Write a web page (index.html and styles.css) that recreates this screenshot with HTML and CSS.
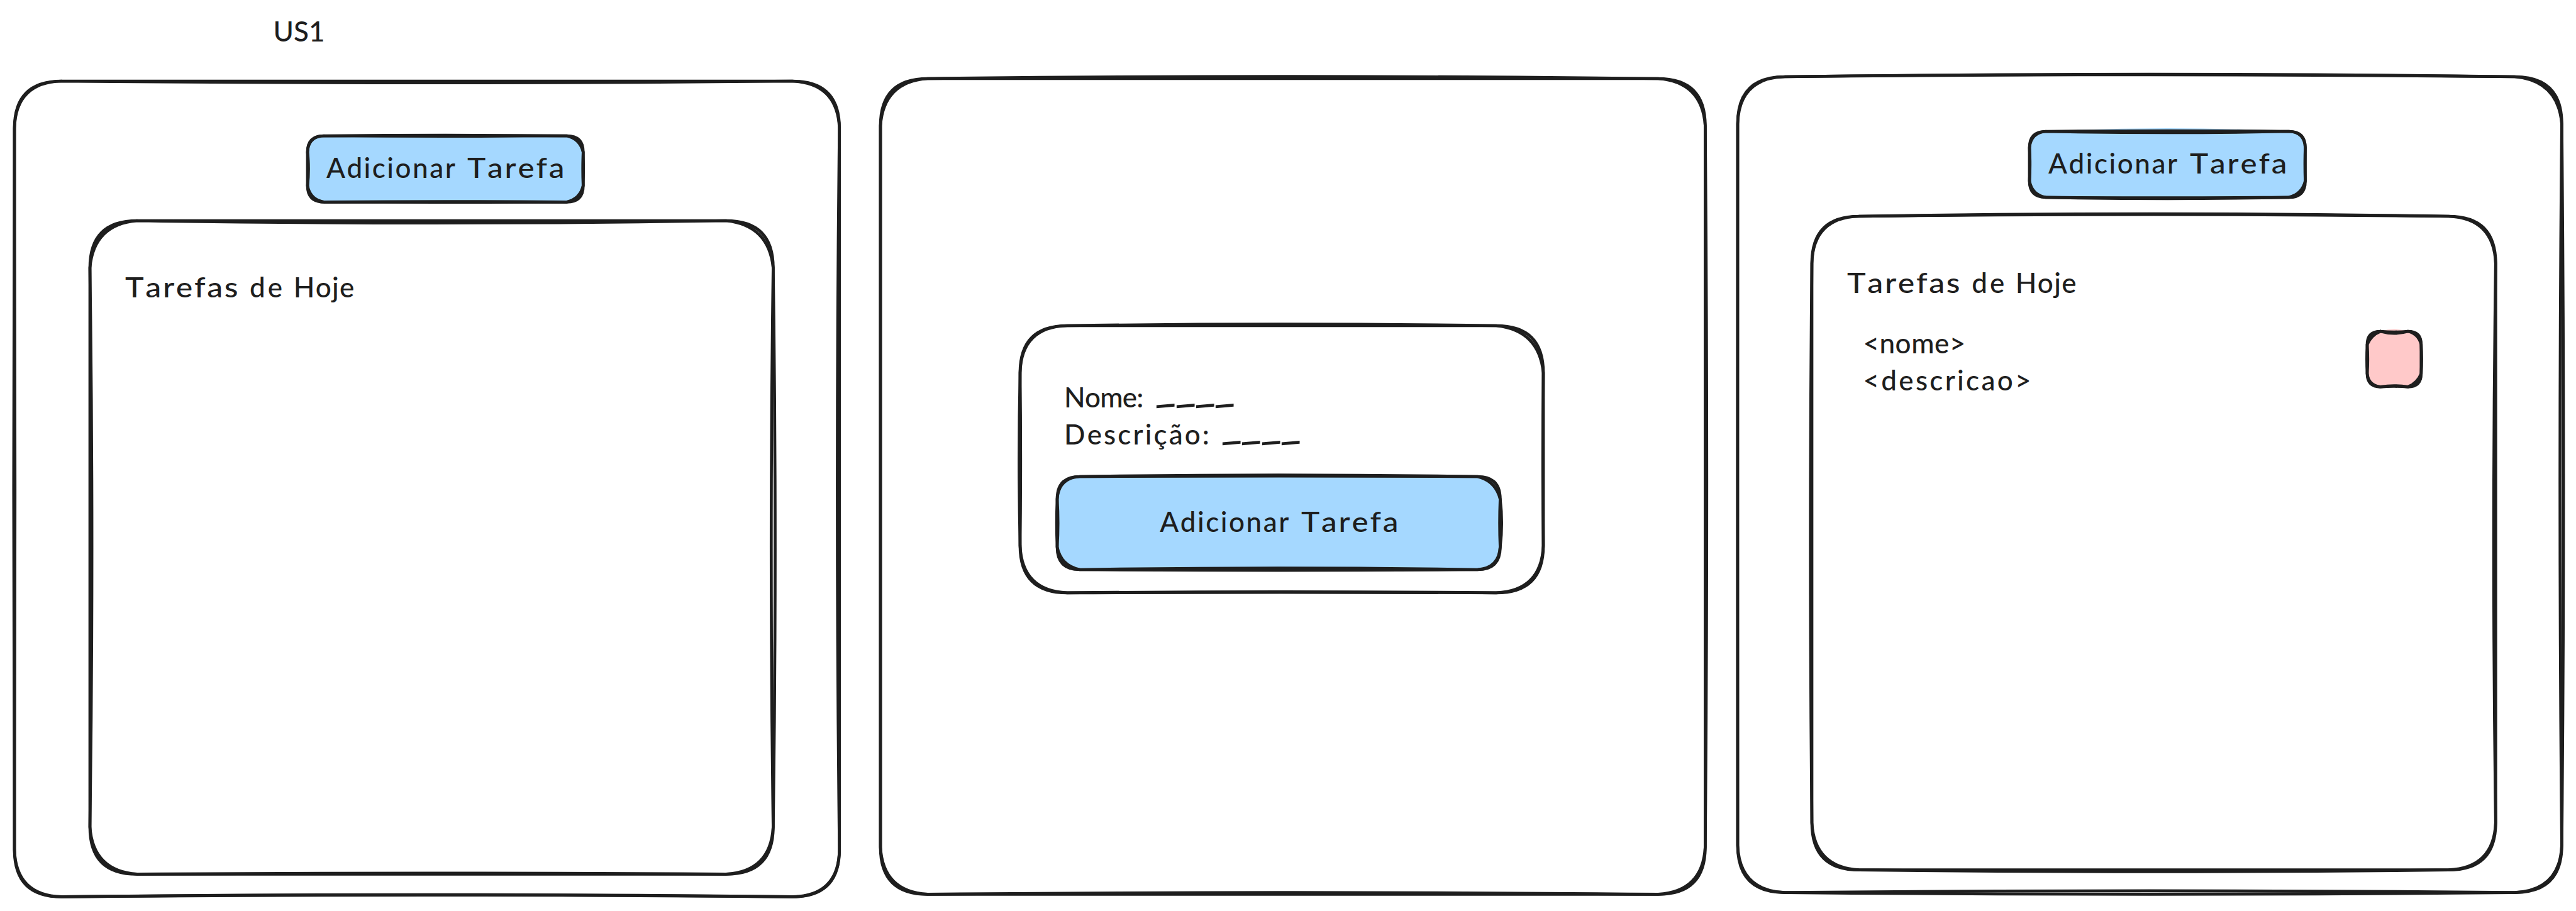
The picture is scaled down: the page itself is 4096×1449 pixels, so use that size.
FILE: index.html
```html
<!DOCTYPE html>
<html lang="pt">
<head>
<meta charset="utf-8">
<title>US1</title>
<link rel="stylesheet" href="styles.css">
</head>
<body>
<main class="board">
  <h1 class="story">US1</h1>
  <div class="screens">

    <section class="screen screen-empty">
      <svg class="outline" data-w="1311.7" data-h="1297.4" data-r="75" data-c="2 3 1 2" data-a="0 0 -2.8 1.2" data-b="-2.7 -3.3 -3.4 -.8"></svg>
      <button class="add add-small">
        <svg class="outline blue" data-w="438.3" data-h="105.3" data-r="26" data-c="1 5 5 4" data-a=".8 .4 .4 -1.5" data-b="-.6 -.6 -.8 0"></svg>
        <span class="label"><span class="adicionar">Adicionar</span> <span class="tarefa">Tarefa</span></span>
      </button>
      <div class="list">
        <svg class="outline" data-w="1086.4" data-h="1039.4" data-r="75" data-c="6 7 4 5" data-a="0 3.1 0 0" data-b="-3.6 -3.1 -1.6 -3.1"></svg>
        <h2 class="title"><span class="tarefas">Tarefas</span> <span class="de">de</span> <span class="hoje">Hoje</span></h2>
      </div>
    </section>

    <section class="screen screen-form">
      <svg class="outline" data-w="1311.4" data-h="1297.4" data-r="75" data-c="5 5 4 4" data-a="0 2.4 0 0" data-b="3.3 0 -2.8 0"></svg>
      <form class="modal">
        <svg class="outline" data-w="832" data-h="424.9" data-r="75" data-c="2 7 3 3" data-a="0 0 -1.6 1.5" data-b="2.4 -.8 -.8 -.8"></svg>
        <p class="field nome"><span class="nome-label">Nome:</span> <span class="blank"><i>_</i><i>_</i><i>_</i><i>_</i></span></p>
        <p class="field descricao"><span class="descricao-label">Descrição:</span> <span class="blank"><i>_</i><i>_</i><i>_</i><i>_</i></span></p>
        <button class="add add-wide" type="button">
          <svg class="outline blue" data-w="704.4" data-h="148" data-r="36" data-c="2 7 2 6" data-a="2.4 2.3 -2.3 .8" data-b=".8 -.8 1.2 -1.2"></svg>
          <span class="label"><span class="adicionar">Adicionar</span> <span class="tarefa">Tarefa</span></span>
        </button>
      </form>
    </section>

    <section class="screen screen-task">
      <svg class="outline" data-w="1310.4" data-h="1297.6" data-r="75" data-c="2 6 3 3" data-a="3.8 2.7 2.7 0" data-b="3.1 -2.8 -2.7 .2"></svg>
      <button class="add add-small">
        <svg class="outline blue" data-w="438.5" data-h="104.9" data-r="26" data-fill="5 0 0 0" data-c="2 1 5 4" data-a=".8 0 2 -.8" data-b="-2 -.5 .8 0"></svg>
        <span class="label"><span class="adicionar">Adicionar</span> <span class="tarefa">Tarefa</span></span>
      </button>
      <div class="list">
        <svg class="outline" data-w="1087.3" data-h="1039.7" data-r="75" data-c="2 3 3 4" data-a="3.9 0 0 2.3" data-b="2.8 -3.1 2.7 0"></svg>
        <h2 class="title"><span class="tarefas">Tarefas</span> <span class="de">de</span> <span class="hoje">Hoje</span></h2>
        <div class="task">
          <div class="task-text">
            <p class="task-nome">&lt;nome&gt;</p>
            <p class="task-descricao">&lt;descricao&gt;</p>
          </div>
          <div class="remove">
            <svg class="outline pink" data-w="85.8" data-h="88.3" data-r="21" data-fill="3.4 0 0 0" data-c="6 4 6 2" data-a="-1 .8 -.8 .6" data-b="-3.2 0 -1.8 -.8"></svg>
          </div>
        </div>
      </div>
    </section>

  </div>
</main>
<script src="sketch.js"></script>
</body>
</html>
```
FILE: styles.css
```css
* { box-sizing: border-box; }

body {
  margin: 0;
  background: #fff;
  color: #1e1e1e;
  font: 500 44px/58.6px Lato, sans-serif;
  font-kerning: none;
}

h1, h2, p { margin: 0; font: inherit; font-kerning: inherit; }

.board {
  width: 4096px;
  height: 1449px;
  overflow: hidden;
  padding: 19.5px 22.6px 0 23.1px;
}

.story { padding-left: 411.5px; height: 102.4px; }

.screens { display: flex; align-items: flex-start; }

.screen { position: relative; display: flex; flex-direction: column; flex: none; }
.screen-empty { width: 1311.7px; height: 1297.4px; margin-top: 7.2px; padding: 86.8px 0 0 119.8px; }
.screen-form { width: 1311.4px; height: 1297.4px; margin: 3.1px 51.3px 0 65.5px; padding: 393.2px 0 0 221.8px; }
.screen-task { width: 1310.4px; height: 1297.6px; padding: 87.5px 0 0 118.1px; }

/* hand-drawn borders, painted behind each box's content */
.outline {
  position: absolute;
  inset: 0;
  width: 100%;
  height: 100%;
  overflow: visible;
  fill: none;
  z-index: 0;
}
.outline .line { fill: none; stroke: #1e1e1e; stroke-width: 4.7; stroke-linecap: round; stroke-linejoin: round; }
.blue .area { fill: #a5d8ff; }
.pink .area { fill: #ffc9c9; }

.add {
  position: relative;
  display: flex;
  align-items: center;
  justify-content: center;
  padding: 0 0 5px;
  border: 0;
  background: none;
  color: inherit;
  font: inherit;
  font-kerning: inherit;
}
.add-small { width: 438.4px; height: 105.2px; margin-left: 345.9px; }
.add-wide { width: 704.4px; height: 148px; margin: 38.5px 0 0 -10.9px; }

.label { position: relative; padding-left: 4px; white-space: nowrap; word-spacing: 6px; }
.adicionar { letter-spacing: 2.5px; }
.tarefa, .tarefas { display: inline-block; transform-origin: 0 50%; }
.tarefa { letter-spacing: 2.5px; margin-right: 17.6px; transform: scaleX(1.123); }

.list { position: relative; width: 1086.8px; height: 1039.5px; margin-top: 29.9px; padding: 75.8px 0 0 56px; }
.title { position: relative; white-space: nowrap; word-spacing: 4.5px; }
.tarefas { letter-spacing: 2.3px; margin-right: 22.3px; transform: scaleX(1.137); }
.de { letter-spacing: 4px; }
.hoje { letter-spacing: 1.3px; margin-left: -2px; }

.modal { position: relative; width: 832px; height: 424.9px; padding: 83.8px 0 0 70px; }
.field { position: relative; white-space: nowrap; }
.nome { word-spacing: 9.6px; }
.descricao { word-spacing: 5.7px; }
.nome-label { letter-spacing: -.8px; }
.descricao-label { letter-spacing: 3.1px; }
.blank { display: inline-flex; word-spacing: 0; }
.blank i {
  width: 31.4px;
  font-style: normal;
  -webkit-text-stroke: 1.8px #1e1e1e;
  transform-origin: 0 80%;
  transform: translateY(-6px) skewY(-5deg) scaleX(1.5);
}

.task { position: relative; display: flex; justify-content: space-between; padding: 37.5px 118px 0 25.4px; }
.task-nome { letter-spacing: .5px; }
.task-descricao { letter-spacing: 3.3px; }
.remove { position: relative; width: 85.8px; height: 88.3px; margin-top: 10.7px; }
```
FILE: sketch.js
```js
// Draws every box outline as two slightly bowed passes of a pen.
// bows: outward bulge of the top, right, bottom and left sides.
// cuts: how far the second pass cuts inside each corner.
const nums = (text) => text.split(' ').map(Number);

function roundedPath(w, h, r, bows, cuts) {
  const [t, ri, b, l] = bows.map((n) => n * 2);
  const [tl, tr, br, bl] = cuts;
  return `M${r} 0Q${w / 2} ${-t} ${w - r} 0Q${w - tr} ${tr} ${w} ${r}` +
    `Q${w + ri} ${h / 2} ${w} ${h - r}Q${w - br} ${h - br} ${w - r} ${h}` +
    `Q${w / 2} ${h + b} ${r} ${h}Q${bl} ${h - bl} 0 ${h - r}` +
    `Q${-l} ${h / 2} 0 ${r}Q${tl} ${tl} ${r} 0`;
}

function addPath(svg, name, d) {
  const path = document.createElementNS('http://www.w3.org/2000/svg', 'path');
  path.setAttribute('class', name);
  path.setAttribute('d', d);
  svg.append(path);
}

document.querySelectorAll('.outline').forEach((svg) => {
  const { w, h, r, a, b, c, fill } = svg.dataset;
  const size = [Number(w), Number(h), Number(r)];
  const flat = [0, 0, 0, 0];
  addPath(svg, 'area', roundedPath(...size, nums(fill || '0 0 0 0'), flat));
  addPath(svg, 'line', roundedPath(...size, nums(a), flat));
  addPath(svg, 'line', roundedPath(...size, nums(b), nums(c)));
});
```
